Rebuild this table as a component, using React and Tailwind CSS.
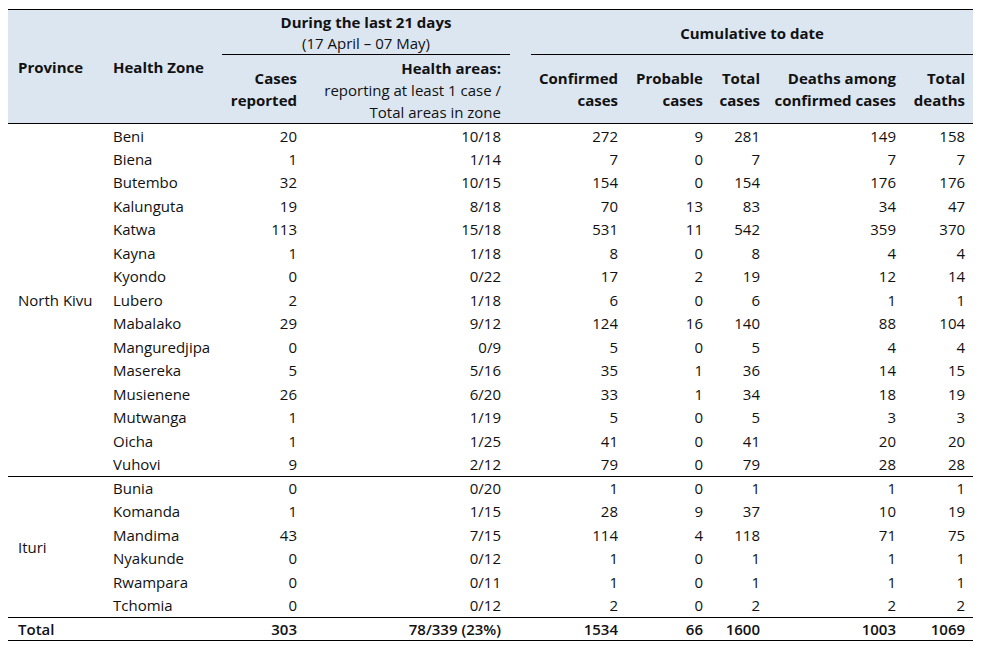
import React from 'react'

const rows = [
    ['Beni', 20, '10/18', 272, 9, 281, 149, 158],
    ['Biena', 1, '1/14', 7, 0, 7, 7, 7],
    ['Butembo', 32, '10/15', 154, 0, 154, 176, 176],
    ['Kalunguta', 19, '8/18', 70, 13, 83, 34, 47],
    ['Katwa', 113, '15/18', 531, 11, 542, 359, 370],
    ['Kayna', 1, '1/18', 8, 0, 8, 4, 4],
    ['Kyondo', 0, '0/22', 17, 2, 19, 12, 14],
    ['Lubero', 2, '1/18', 6, 0, 6, 1, 1],
    ['Mabalako', 29, '9/12', 124, 16, 140, 88, 104],
    ['Manguredjipa', 0, '0/9', 5, 0, 5, 4, 4],
    ['Masereka', 5, '5/16', 35, 1, 36, 14, 15],
    ['Musienene', 26, '6/20', 33, 1, 34, 18, 19],
    ['Mutwanga', 1, '1/19', 5, 0, 5, 3, 3],
    ['Oicha', 1, '1/25', 41, 0, 41, 20, 20],
    ['Vuhovi', 9, '2/12', 79, 0, 79, 28, 28],
    ['Bunia', 0, '0/20', 1, 0, 1, 1, 1],
    ['Komanda', 1, '1/15', 28, 9, 37, 10, 19],
    ['Mandima', 43, '7/15', 114, 4, 118, 71, 75],
    ['Nyakunde', 0, '0/12', 1, 0, 1, 1, 1],
    ['Rwampara', 0, '0/11', 1, 0, 1, 1, 1],
    ['Tchomia', 0, '0/12', 2, 0, 2, 2, 2],
]

const widths = [97, 117, 82, 206, 21, 94, 85, 57, 136, 70]

function DataRow({ r, first, province, span }) {
    return (
        <tr className={`h-[23.5px] ${first ? 'border-t border-black' : ''}`}>
            {province && (
                <td rowSpan={span} className="pl-[10px] align-middle">{province}</td>
            )}
            <td className="pl-[8px]">{r[0]}</td>
            <td className="pr-[7px] text-right">{r[1]}</td>
            <td className="pr-[9px] text-right">{r[2]}</td>
            <td></td>
            <td className="pr-[7px] text-right">{r[3]}</td>
            <td className="pr-[7px] text-right">{r[4]}</td>
            <td className="pr-[7px] text-right">{r[5]}</td>
            <td className="pr-[7px] text-right">{r[6]}</td>
            <td className="pr-[8px] text-right">{r[7]}</td>
        </tr>
    )
}

export default function App() {
    return (
        <div className="w-[983px] h-[651px] bg-white pt-[9px] pl-[8px] text-[#111] text-[15px] leading-[22px]" style={{ fontFamily: '"Open Sans", Lato, sans-serif' }}>
            <table className="table-fixed border-collapse w-[965px]">
                <colgroup>
                    {widths.map((w, i) => <col key={i} style={{ width: w }} />)}
                </colgroup>
                <thead className="bg-[#dce6f1] font-semibold">
                    <tr className="h-[45px] border-t border-black">
                        <th rowSpan={2} className="text-left pl-[10px] align-middle">Province</th>
                        <th rowSpan={2} className="text-left pl-[8px] align-middle">Health Zone</th>
                        <th colSpan={2} className="text-center border-b border-black align-top pt-[2px] leading-[21px]">
                            <div>During the last 21 days</div>
                            <div className="font-normal">(17 April – 07 May)</div>
                        </th>
                        <th></th>
                        <th colSpan={5} className="text-center border-b border-black align-middle pt-[2px]">Cumulative to date</th>
                    </tr>
                    <tr className="h-[69px] border-b border-black">
                        <th className="text-right pr-[7px] align-middle">Cases<br />reported</th>
                        <th className="text-right pr-[9px] align-top pt-[2px]">
                            <div>Health areas:</div>
                            <div className="font-normal">reporting at least 1 case /</div>
                            <div className="font-normal">Total areas in zone</div>
                        </th>
                        <th></th>
                        <th className="text-right pr-[7px] align-middle">Confirmed<br />cases</th>
                        <th className="text-right pr-[7px] align-middle">Probable<br />cases</th>
                        <th className="text-right pr-[7px] align-middle">Total<br />cases</th>
                        <th className="text-right pr-[7px] align-middle">Deaths among<br />confirmed cases</th>
                        <th className="text-right pr-[8px] align-middle">Total<br />deaths</th>
                    </tr>
                </thead>
                <tbody>
                    {rows.slice(0, 15).map((r, i) => (
                        <DataRow key={r[0]} r={r} first={i === 0} province={i === 0 ? 'North Kivu' : null} span={15} />
                    ))}
                    {rows.slice(15).map((r, i) => (
                        <DataRow key={r[0]} r={r} first={i === 0} province={i === 0 ? 'Ituri' : null} span={6} />
                    ))}
                    <tr className="h-[23.5px] border-t border-b border-black font-semibold">
                        <td className="pl-[10px]">Total</td>
                        <td></td>
                        <td className="pr-[7px] text-right">303</td>
                        <td className="pr-[9px] text-right">78/339 (23%)</td>
                        <td></td>
                        <td className="pr-[7px] text-right">1534</td>
                        <td className="pr-[7px] text-right">66</td>
                        <td className="pr-[7px] text-right">1600</td>
                        <td className="pr-[7px] text-right">1003</td>
                        <td className="pr-[8px] text-right">1069</td>
                    </tr>
                </tbody>
            </table>
        </div>
    )
}
